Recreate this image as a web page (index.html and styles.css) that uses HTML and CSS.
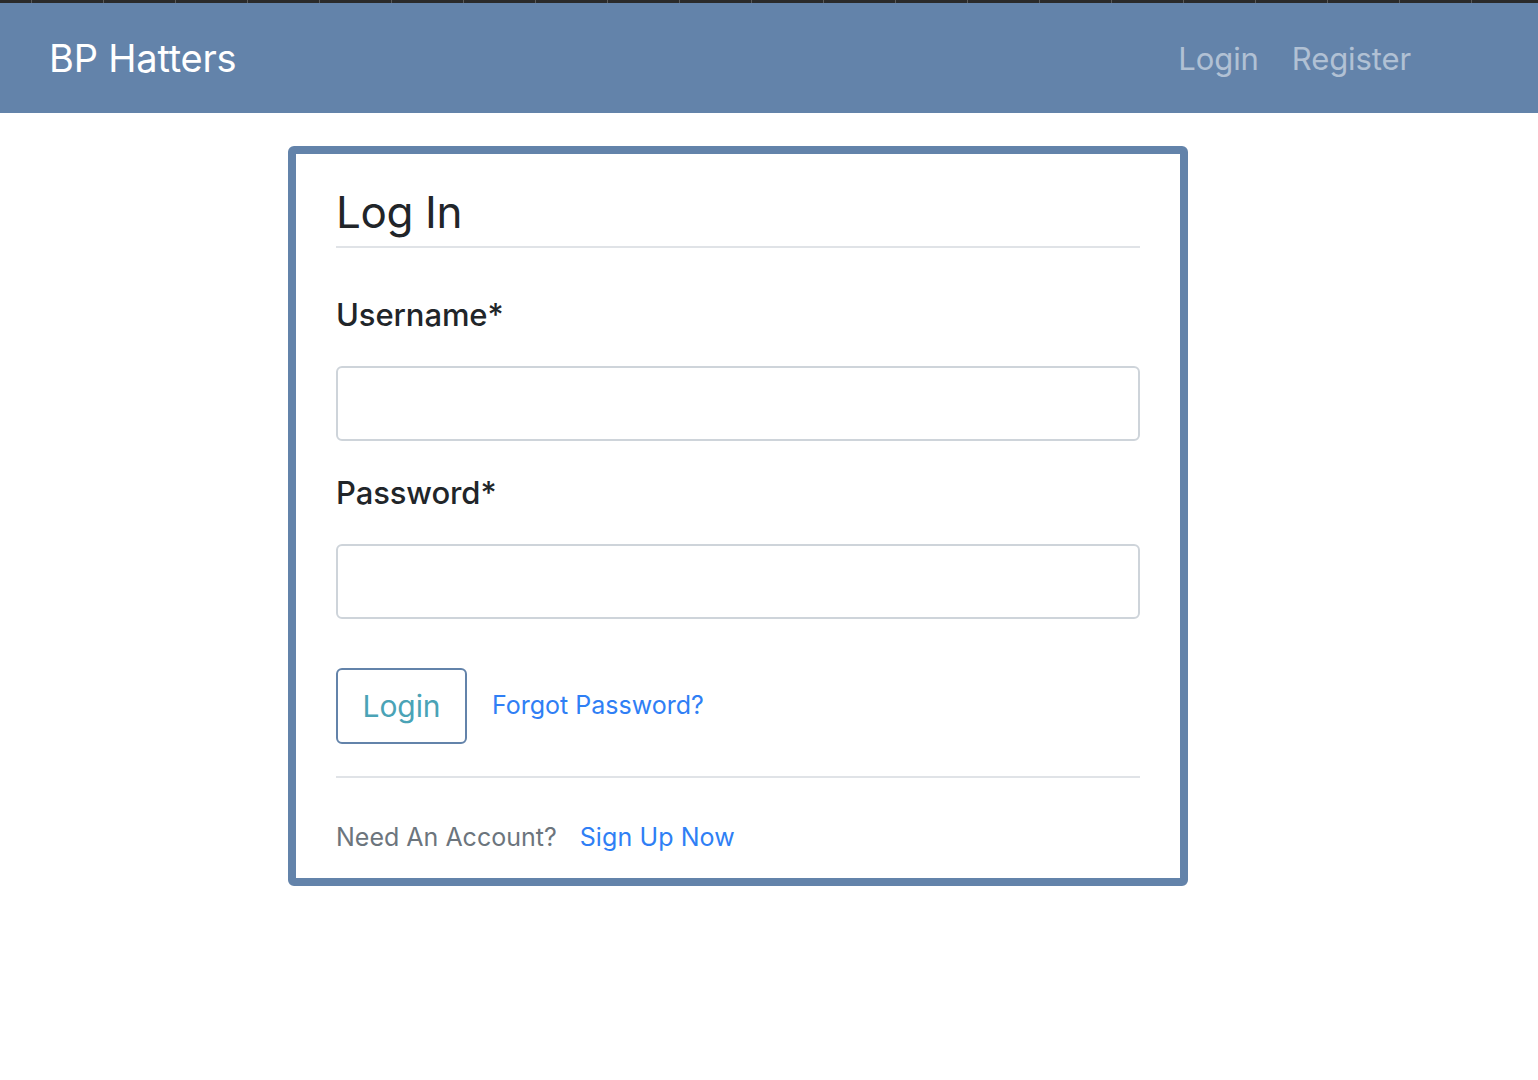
FILE: index.html
```html
<!DOCTYPE html>
<html lang="en">
<head>
<meta charset="utf-8">
<title>BP Hatters - Log In</title>
<link rel="stylesheet" href="styles.css">
</head>
<body>
<div class="topstrip"></div>
<nav class="navbar">
  <a class="brand" href="#">BP Hatters</a>
  <div class="navlinks">
    <a class="navlink" href="#">Login</a>
    <a class="navlink" href="#">Register</a>
  </div>
</nav>
<main class="page">
  <section class="card">
    <h1 class="card-title">Log In</h1>
    <form class="form">
      <div class="group">
        <label class="label" for="username">Username*</label>
        <input class="input" id="username" type="text">
      </div>
      <div class="group">
        <label class="label" for="password">Password*</label>
        <input class="input" id="password" type="password">
      </div>
      <div class="actions">
        <button class="btn" type="button">Login</button>
        <a class="link forgot" href="#">Forgot Password?</a>
      </div>
    </form>
    <div class="footer">
      <span class="muted">Need An Account?</span>
      <a class="link signup" href="#">Sign Up Now</a>
    </div>
  </section>
</main>
</body>
</html>
```
FILE: styles.css
```css
* { box-sizing: border-box; }
html, body { margin: 0; padding: 0; }
body {
  font-family: Inter, "Noto Sans", "Liberation Sans", sans-serif;
  color: #212529;
  background: #fff;
}
.topstrip {
  height: 3px;
  background-color: #2a2a2a;
  background-image: repeating-linear-gradient(to right, transparent 0, transparent 31px, #5a5a5a 31px, #5a5a5a 32px, transparent 32px, transparent 72px);
}
.navbar {
  height: 110px;
  background: #6383aa;
  display: flex;
  align-items: center;
  justify-content: space-between;
  padding: 0 127px 0 49px;
}
.brand {
  color: #fff;
  text-decoration: none;
  font-size: 38px;
  letter-spacing: -0.2px;
  line-height: 1;
}
.navlinks { display: flex; gap: 33px; }
.navlink {
  color: rgba(255, 255, 255, 0.5);
  text-decoration: none;
  font-size: 31px;
  line-height: 1;
  letter-spacing: -0.1px;
}
.page { padding: 33px 0 0 288px; }
.card {
  width: 900px;
  border: 8px solid #6383aa;
  border-radius: 6px;
  padding: 32px 40px 26px;
}
.card-title {
  margin: 0;
  font-size: 44px;
  font-weight: 400;
  line-height: 53px;
  letter-spacing: -0.4px;
  padding-bottom: 7px;
  border-bottom: 2px solid #e0e3e7;
}
.form { padding-top: 49px; }
.group { display: flex; flex-direction: column; }
.group + .group { margin-top: 34px; }
.label {
  font-size: 31px;
  font-weight: 500;
  line-height: 36px;
  letter-spacing: -0.1px;
  margin-bottom: 33px;
}
.input {
  height: 75px;
  border: 2px solid #ced4da;
  border-radius: 6px;
  font: inherit;
  font-size: 24px;
  padding: 0 18px;
  outline: none;
}
.actions {
  display: flex;
  align-items: center;
  gap: 25px;
  margin-top: 49px;
  padding-bottom: 32px;
  border-bottom: 2px solid #e0e3e7;
}
.btn {
  height: 76px;
  width: 131px;
  border: 2px solid #6383aa;
  border-radius: 6px;
  background: #fff;
  color: #4aa3b6;
  font: inherit;
  font-size: 30px;
  letter-spacing: -0.1px;
  padding: 0;
}
.link {
  color: #2f7ff5;
  text-decoration: none;
}
.forgot { font-size: 25px; letter-spacing: 0; padding-bottom: 2px; }
.footer {
  display: flex;
  align-items: center;
  gap: 23px;
  margin-top: 44px;
  line-height: 30px;
}
.muted { color: #6c757d; font-size: 25px; letter-spacing: 0; }
.signup { font-size: 25px; letter-spacing: 0.1px; }
```
